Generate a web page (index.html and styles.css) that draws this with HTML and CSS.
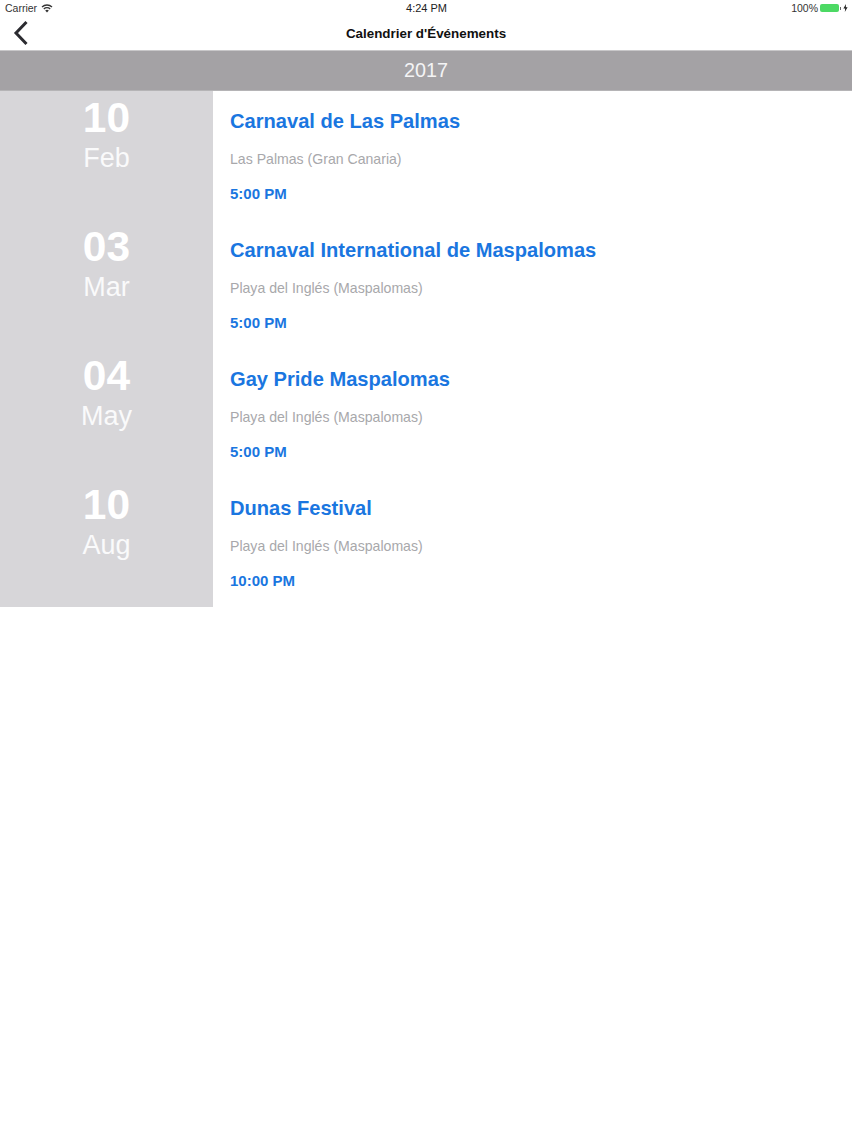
FILE: index.html
```html
<!DOCTYPE html>
<html lang="fr">
<head>
<meta charset="utf-8">
<title>Calendrier d'Événements</title>
<link rel="stylesheet" href="styles.css">
</head>
<body>
<div class="status">
  <div class="status-left">
    <span>Carrier</span>
    <svg class="wifi" width="12" height="9" viewBox="0 0 12 9"><path d="M6 8.6 L4.2 6.6 A2.6 2.6 0 0 1 7.8 6.6 Z" fill="#333"/><path d="M2.8 5 A4.6 4.6 0 0 1 9.2 5" fill="none" stroke="#333" stroke-width="1.3"/><path d="M1 3 A7.2 7.2 0 0 1 11 3" fill="none" stroke="#333" stroke-width="1.3"/></svg>
  </div>
  <div class="status-time">4:24 PM</div>
  <div class="status-right">
    <span>100%</span>
    <span class="battery"></span>
    <span class="battery-tip"></span>
    <svg class="bolt" width="5" height="8" viewBox="0 0 5 8"><path d="M3 0 L0.4 4.5 H2.2 L1.8 8 L4.6 3.2 H2.8 Z" fill="#222"/></svg>
  </div>
</div>
<header class="nav">
  <svg class="back" width="16" height="26" viewBox="0 0 16 26"><path d="M13.5 2 L3 13 L13.5 24" fill="none" stroke="#2b2b30" stroke-width="3"/></svg>
  <h1 class="nav-title">Calendrier d'Événements</h1>
</header>
<div class="year">2017</div>
<main class="list">
  <article class="row">
    <div class="date"><div class="day">10</div><div class="month">Feb</div></div>
    <div class="info"><h2 class="name">Carnaval de Las Palmas</h2><p class="place">Las Palmas (Gran Canaria)</p><p class="time">5:00 PM</p></div>
  </article>
  <article class="row">
    <div class="date"><div class="day">03</div><div class="month">Mar</div></div>
    <div class="info"><h2 class="name">Carnaval International de Maspalomas</h2><p class="place">Playa del Inglés (Maspalomas)</p><p class="time">5:00 PM</p></div>
  </article>
  <article class="row">
    <div class="date"><div class="day">04</div><div class="month">May</div></div>
    <div class="info"><h2 class="name">Gay Pride Maspalomas</h2><p class="place">Playa del Inglés (Maspalomas)</p><p class="time">5:00 PM</p></div>
  </article>
  <article class="row">
    <div class="date"><div class="day">10</div><div class="month">Aug</div></div>
    <div class="info"><h2 class="name">Dunas Festival</h2><p class="place">Playa del Inglés (Maspalomas)</p><p class="time">10:00 PM</p></div>
  </article>
</main>
</body>
</html>
```
FILE: styles.css
```css
* { box-sizing: border-box; }
html, body { margin: 0; padding: 0; background: #fff; }
body { font-family: "Liberation Sans", Arial, sans-serif; width: 852px; height: 1136px; overflow: hidden; }

.status { height: 16px; display: grid; grid-template-columns: 1fr auto 1fr; align-items: center; padding: 0 4px 0 5px; font-size: 10.5px; color: #333; }
.status-left { display: flex; align-items: center; gap: 4px; }
.status-time { color: #222; font-size: 11px; }
.status-right { display: flex; align-items: center; justify-content: flex-end; }
.battery { width: 19px; height: 8px; margin-left: 2px; border-radius: 2px; background: #4cd964; display: block; }
.battery-tip { width: 1px; height: 3px; background: #666; margin-right: 2px; margin-left: 1px; }
.bolt { display: block; }
.wifi { display: block; }

.nav { height: 34px; display: flex; align-items: center; justify-content: center; position: relative; }
.back { position: absolute; left: 13px; top: 4px; }
.nav-title { margin: 0; font-size: 13.4px; font-weight: 700; color: #111; }

.year { height: 41px; background: #a4a2a5; border-top: 1px solid #c8c7c9; border-bottom: 1px solid #b5b4b6; color: #f4f4f5; font-size: 19.8px; display: flex; align-items: center; justify-content: center; }

.list { display: flex; flex-direction: column; }
.row { height: 129px; display: flex; }
.date { width: 213px; background: #d7d6d9; color: #fff; text-align: center; }
.day { font-size: 42.5px; font-weight: 700; line-height: 46px; margin-top: 4px; }
.month { font-size: 27px; line-height: 30px; margin-top: 2px; color: #fafafb; }
.info { flex: 1; padding: 17px 0 0 17px; }
.name { margin: 0; font-size: 20.1px; line-height: 26px; font-weight: 700; color: #1a76e0; }
.place { margin: 15px 0 0; font-size: 14.1px; line-height: 20px; color: #a8a8ab; }
.time { margin: 15px 0 0; font-size: 15px; line-height: 20px; font-weight: 700; color: #1a76e0; }
```
